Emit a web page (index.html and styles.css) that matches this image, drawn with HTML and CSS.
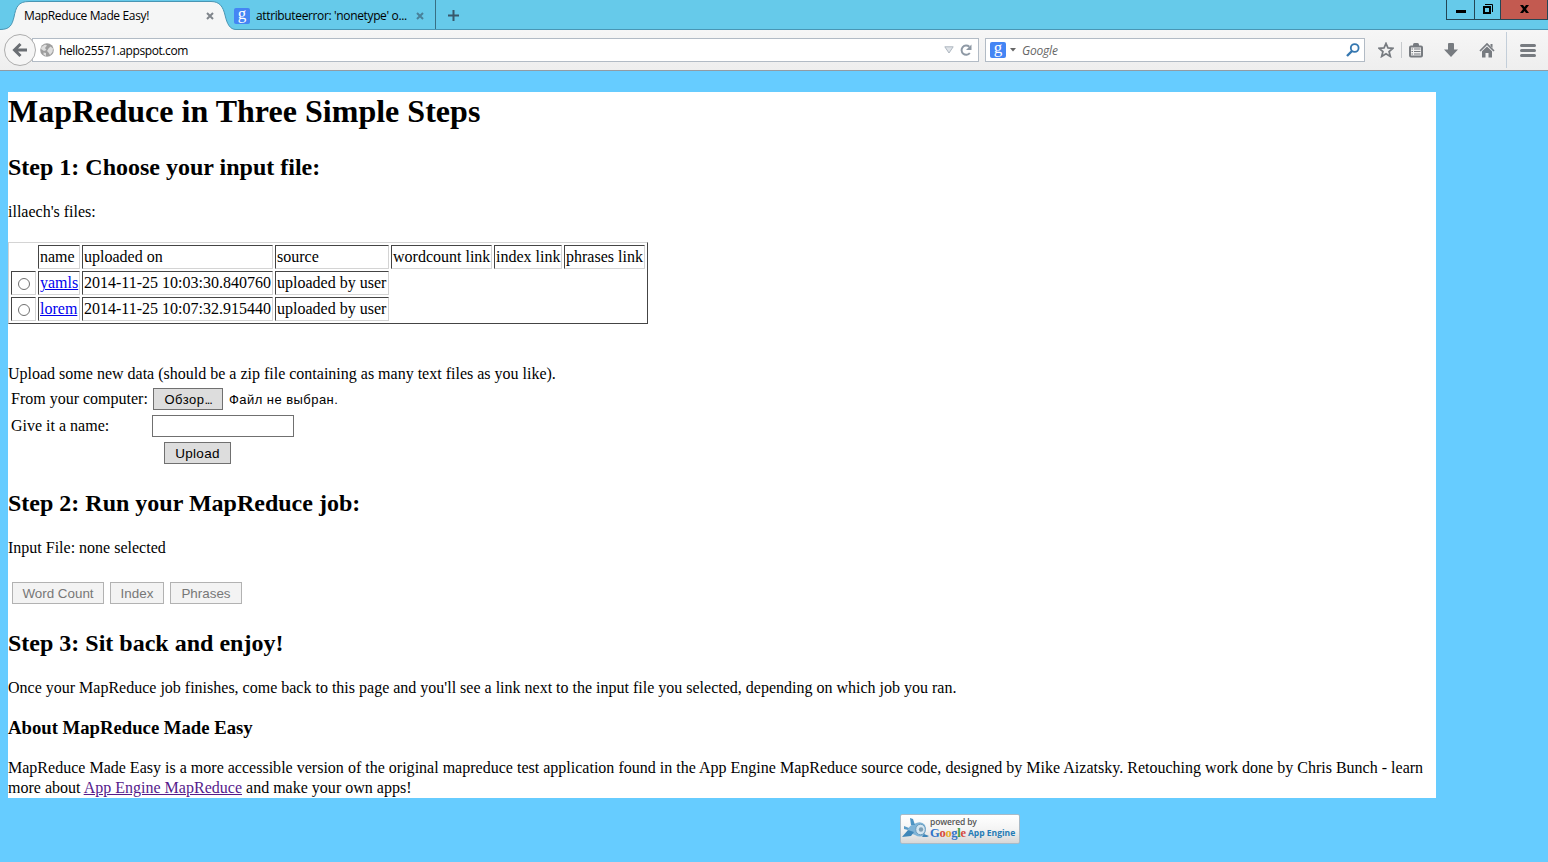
FILE: index.html
```
<!DOCTYPE html>
<html lang="en">
<head>
<meta charset="utf-8">
<title>MapReduce Made Easy!</title>
<link rel="stylesheet" href="styles.css">
</head>
<body>
<header class="chrome">
  <div class="tabs">
    <div class="tab tab-active">
      <svg class="tab-shape" width="236" height="30" viewBox="0 0 236 30"><path d="M0 30V29.5C10 29.5 12 25 14 17C16 7 18 1.5 29 1.5H211C220 1.5 223 7 225 15C227 24 230 29.5 236 29.5V30Z" fill="#f5f6f6"/><path d="M0 29.5C10 29.5 12 25 14 17C16 7 18 1.5 29 1.5H211C220 1.5 223 7 225 15C227 24 230 29.5 236 29.5" fill="none" stroke="#4996b4"/></svg>
      <span class="tab-title t-one">MapReduce Made Easy!</span>
      <svg class="tab-close" width="8" height="8" viewBox="0 0 8 8"><path d="M1 1L7 7M7 1L1 7" stroke="#7f858b" stroke-width="2"/></svg>
    </div>
    <div class="tab tab-other">
      <span class="google-g">g</span>
      <span class="tab-title t-two">attributeerror: 'nonetype' o...</span>
      <svg class="tab-close" width="8" height="8" viewBox="0 0 8 8"><path d="M1 1L7 7M7 1L1 7" stroke="#48819a" stroke-width="2"/></svg>
    </div>
    <svg class="plus" width="11" height="11" viewBox="0 0 11 11"><path d="M5.5 0V11M0 5.5H11" stroke="#38586b" stroke-width="2"/></svg>
    <div class="window-buttons">
      <div class="wb wb-min"><svg width="10" height="3"><rect width="10" height="3"/></svg></div>
      <div class="wb wb-max"><svg width="10" height="10" viewBox="0 0 10 10" fill="none" stroke="#000"><path d="M2 .5H9.5V8"/><rect x="1" y="3" width="6" height="6" stroke-width="2"/></svg></div>
      <div class="wb wb-close"><svg width="9" height="8" viewBox="0 0 9 8"><path d="M0 0H3L4.5 2L6 0H9L6 4L9 8H6L4.5 6L3 8H0L3 4Z"/></svg></div>
    </div>
  </div>
  <div class="toolbar">
    <div class="back"><svg width="16" height="16" viewBox="0 0 16 16"><path d="M8.500 2L2.500 8L8.500 14M3 8H15" fill="none" stroke="#6a6e73" stroke-width="3"/></svg></div>
    <div class="url">
      <svg width="14" height="14" viewBox="0 0 14 14"><circle cx="7" cy="7" r="6.8" fill="#9d9d9d"/><path d="M1.500 4L5 1.500L7 2.500L5 5L6.500 7L4 8L1 6ZM8.500 5.500L10.500 3.500L13 5.500L12.500 9L10 12L8.500 9.500L7 8ZM3.500 9.500L6 10L6 13L3.500 11.500Z" fill="#dedede"/></svg>
      <span class="url-text">hello25571.appspot.com</span>
      <svg class="drop" width="10" height="8" viewBox="0 0 10 8"><path d="M.8 .8H9.2L5 7Z" fill="#dfe3e8" stroke="#aeb7c0"/></svg>
      <svg class="reload" width="12" height="12" viewBox="0 0 12 12"><path d="M9.300 2.800A4.600 4.600 0 1 0 9.800 9" fill="none" stroke="#8e99a5" stroke-width="2"/><path d="M11.500 .5V6H6Z" fill="#8e99a5"/></svg>
    </div>
    <div class="search">
      <span class="google-g">g</span>
      <svg class="caret" width="6" height="4" viewBox="0 0 6 4"><path d="M0 0H6L3 3.500Z" fill="#666"/></svg>
      <span class="search-text">Google</span>
      <svg class="lens" width="14" height="14" viewBox="0 0 14 14" fill="none" stroke="#3577b0"><circle cx="8.700" cy="5" r="3.900" stroke-width="1.800"/><path d="M6 8L1 13" stroke-width="2.400"/></svg>
    </div>
    <div class="tools">
      <svg width="16" height="16" viewBox="0 0 16 16"><path d="M8 1.500L10 6L14.800 6.400L11.100 9.600L12.300 14.400L8 11.800L3.700 14.400L4.900 9.600L1.200 6.400L6 6Z" fill="none" stroke="#777b80" stroke-width="1.800"/></svg>
      <i class="divider"></i>
      <svg class="list" width="14" height="15" viewBox="0 0 14 15"><path d="M4 3V1.500Q4 0 5.500 0H8.500Q10 0 10 1.500V3Z" fill="#777b80"/><rect x="1" y="3.500" width="12" height="10" rx="1" fill="none" stroke="#777b80" stroke-width="2"/><path d="M2.500 6H4M5 6H11.500M2.500 8.500H4M5 8.500H11.500M2.500 11H4M5 11H11.500" stroke="#777b80" stroke-width="1.200"/></svg>
      <svg class="down" width="14" height="14" viewBox="0 0 14 14"><path d="M4 1Q4 0 5 0H9Q10 0 10 1V6.500H14L7 14L0 6.500H4Z" fill="#777b80"/></svg>
      <svg class="home" width="16" height="15" viewBox="0 0 16 15"><path d="M1 8L8 1L15 8" fill="none" stroke="#777b80" stroke-width="1.700"/><path d="M11.500 1H13.500V5L11.500 3ZM3 8.200L8 3.500L13 8.200V14.500H9.500V10H6.500V14.500H3Z" fill="#777b80"/></svg>
      <i class="divider tall"></i>
      <svg class="menu" width="16" height="13" viewBox="0 0 16 13"><path d="M1.500 1.500H14.500M1.500 6.500H14.500M1.500 11.500H14.500" stroke="#777b80" stroke-width="3" stroke-linecap="round"/></svg>
    </div>
  </div>
</header>
<main class="page">
  <h1>MapReduce in Three Simple Steps</h1>
  <h2 class="step-one">Step 1: Choose your input file:</h2>
  <p class="owner">illaech's files:</p>
  <table class="files">
    <colgroup><col class="c1"><col class="c2"><col class="c3"><col class="c4"><col class="c5"><col class="c6"><col class="c7"></colgroup>
    <tr><td class="bare"></td><td>name</td><td>uploaded on</td><td>source</td><td>wordcount link</td><td>index link</td><td>phrases link</td></tr>
    <tr><td><i class="radio"></i></td><td><a href="#">yamls</a></td><td>2014-11-25 10:03:30.840760</td><td>uploaded by user</td></tr>
    <tr><td><i class="radio"></i></td><td><a href="#">lorem</a></td><td>2014-11-25 10:07:32.915440</td><td>uploaded by user</td></tr>
  </table>
  <p class="upload-note">Upload some new data (should be a zip file containing as many text files as you like).</p>
  <form class="upload">
    <div class="row"><span class="label">From your computer:</span><button type="button" class="browse">Обзор<span class="dots">...</span></button><span class="nofile">Файл не выбран.</span></div>
    <div class="row"><span class="label">Give it a name:</span><input class="name" type="text"></div>
    <div class="row"><button type="button" class="send">Upload</button></div>
  </form>
  <h2 class="step-two">Step 2: Run your MapReduce job:</h2>
  <p class="input-file">Input File: none selected</p>
  <div class="jobs"><button class="b1" disabled>Word Count</button><button class="b2" disabled>Index</button><button class="b3" disabled>Phrases</button></div>
  <h2 class="step-three">Step 3: Sit back and enjoy!</h2>
  <p class="once">Once your MapReduce job finishes, come back to this page and you'll see a link next to the input file you selected, depending on which job you ran.</p>
  <h3>About MapReduce Made Easy</h3>
  <p class="about">MapReduce Made Easy is a more accessible version of the original mapreduce test application found in the App Engine MapReduce source code, designed by Mike Aizatsky. Retouching work done by Chris Bunch - learn<br>more about <a class="visited" href="#">App Engine MapReduce</a> and make your own apps!</p>
</main>
<footer class="badge">
  <svg width="27" height="24" viewBox="0 0 27 24"><path d="M6 12Q8 8 12 7Q19 3 23 8Q25 13 22 18Q18 21 13 18Q7 16 6 12Z" fill="#7fb4d8"/><path d="M8 1L11 2L13 8L9 8Z" fill="#4d94c4"/><path d="M0 20L6 13L12 15L9 19Z" fill="#3f86b8"/><path d="M2 9L7 11L6 13L2 12Z" fill="#5a9bc7"/><path d="M22 17L27 19L25 20L20 20Z" fill="#3f86b8"/><ellipse cx="18.500" cy="12.500" rx="4.800" ry="5.300" fill="#d5e6f1" stroke="#6b9cbd"/><circle cx="19" cy="12.500" r="2.200" fill="#7f9fb5"/></svg>
  <div class="badge-text"><span class="powered">powered by</span><span class="brand"><span class="logo"><b class="lb">G</b><b class="lr">o</b><b class="ly">o</b><b class="lb">g</b><b class="lg">l</b><b class="lr">e</b></span><span class="engine">App Engine</span></span></div>
</footer>
</body>
</html>
```
FILE: styles.css
```
* { box-sizing: border-box; }
body { margin: 0; width: 1548px; height: 862px; overflow: hidden; background: #66ccff; color: #000; font: 16px/20px "Liberation Serif", serif; }
svg { display: block; flex: none; }
h1, h2, h3, p { margin: 0; white-space: nowrap; }

.chrome { height: 71px; font: 12px/16px "Open Sans", sans-serif; border-bottom: 1px solid #919ba3; background: #f3f3f3; }
.tabs { height: 30px; display: flex; background: #66caea; border-bottom: 1px solid #4996b4; }
.tab { height: 30px; display: flex; align-items: center; position: relative; }
.tab-shape { position: absolute; left: 0; top: 0; }
.tab-active { width: 225px; padding: 1px 11px 0 24px; z-index: 1; justify-content: space-between; }
.tab-title, .tab-close { position: relative; white-space: nowrap; }
.tab-title { letter-spacing: -0.36px; }
.tab-other { width: 211px; height: 29px; padding: 2px 11px 0 9px; border-right: 1px solid #386f84; }
.tab-other .tab-close { margin-left: auto; }
.t-two { margin-left: 6px; }
.google-g { width: 16px; height: 16px; flex: none; border-radius: 2px; background: #4485f4; color: #fff; font: 17px/12px "Liberation Serif", serif; text-align: center; }
.plus { margin: 10px 0 0 12px; }
.window-buttons { margin-left: auto; width: 102px; height: 20px; display: flex; border: 1px solid #234655; border-top: 0; }
.wb { display: flex; align-items: center; justify-content: center; border-right: 1px solid #234655; }
.wb-min { width: 28px; padding-top: 4px; }
.wb-max { width: 26px; padding-bottom: 1px; }
.wb-close { width: 46px; padding-bottom: 1px; background: #c35a50; border: 0; }
.toolbar { height: 40px; display: flex; align-items: center; padding-left: 4px; background: linear-gradient(#f6f6f6, #eeeeee); }
.back { width: 32px; height: 32px; flex: none; border: 1px solid #adadad; border-radius: 50%; display: flex; align-items: center; justify-content: center; background: #f5f5f5; z-index: 1; }
.url { width: 947px; height: 24px; margin-left: -4px; padding: 0 6px 0 7px; background: #fff; border: 1px solid #b2bbc5; display: flex; align-items: center; }
.url-text { margin-left: 5px; padding-top: 2px; letter-spacing: -0.41px; }
.drop { margin-left: auto; }
.reload { margin-left: 6px; }
.search { width: 380px; height: 24px; margin-left: 6px; padding: 0 4px; background: #fff; border: 1px solid #b2bbc5; display: flex; align-items: center; }
.caret { margin-left: 4px; }
.search-text { margin-left: 6px; padding-top: 2px; letter-spacing: -0.2px; font-style: italic; color: #666; }
.lens { margin-left: auto; }
.tools { display: flex; align-items: center; margin-left: 13px; }
.divider { width: 1px; height: 16px; margin-left: 7px; background: #c6c9cc; }
.tall { height: 36px; margin-left: 11px; background: #c3ced9; }
.list { margin-left: 7px; }
.down { margin-left: 21px; }
.home { margin-left: 21px; }
.menu { margin-left: 13px; }

.page { width: 1428px; height: 706px; margin: 21px 0 0 8px; background: #fff; }
h1 { font-size: 32px; line-height: 38px; letter-spacing: 0.02px; }
h2 { font-size: 24px; line-height: 28px; }
h3 { font-size: 18.72px; line-height: 20px; margin-top: 20px; }
.step-one { margin-top: 23px; }
.owner { margin-top: 21px; }
.files { width: 640px; height: 82px; margin-top: 20px; table-layout: fixed; border: 1px solid; border-color: #d4d4d4 #444 #444 #d4d4d4; border-collapse: separate; border-spacing: 2px; }
.files td { height: 24px; padding: 1px; border: 1px solid; border-color: #444 #d4d4d4 #d4d4d4 #444; white-space: nowrap; line-height: 20px; }
.files .bare { border-color: transparent; }
.c1 { width: 25px; } .c2 { width: 42px; } .c3 { width: 191px; } .c4 { width: 114px; } .c5 { width: 101px; } .c6 { width: 68px; } .c7 { width: 81px; }
.radio { display: block; width: 12px; height: 12px; margin: 2px 0 0 5px; border: 1px solid #707070; border-radius: 50%; }
a { color: #0000ee; }
.visited { color: #551a8b; }
.upload-note { margin-top: 40px; }
.upload { padding: 4px 0 0 3px; }
.row { display: flex; align-items: center; height: 22px; margin-bottom: 5px; }
.label { width: 142px; }
button { height: 22px; padding: 1px 0 0; border: 1px solid #707070; background: #dddddd; color: #000; font: 13px/18px "Liberation Sans", sans-serif; white-space: nowrap; }
.browse { width: 70px; letter-spacing: 0.5px; }
.dots { letter-spacing: -1.3px; }
.nofile { margin-left: 6px; padding-top: 1px; font: 13px/18px "Liberation Sans", sans-serif; letter-spacing: 0.45px; }
.name { width: 142px; height: 22px; margin-left: -1px; border: 1px solid #707070; background: #fff; }
.send { width: 67px; margin-left: 153px; font-size: 13.5px; letter-spacing: 0.3px; }
.step-two { margin-top: 25px; }
.input-file { margin-top: 21px; }
.jobs { display: flex; gap: 6px; margin: 24px 0 0 4px; }
.jobs button { border-color: #b2b2b2; background: #f3f3f3; color: #777; font-size: 13.4px; }
.b1 { width: 92px; } .b2 { width: 54px; } .b3 { width: 72px; }
.step-three { margin-top: 25px; }
.once { margin-top: 21px; }
.about { margin-top: 20px; letter-spacing: 0.009px; }

.badge { width: 120px; height: 30px; margin: 16px 0 0 900px; padding: 2px 1px 0; display: flex; border: 1px solid #a9bbc8; border-radius: 2px; background: linear-gradient(#fff, #f4f4f4 50%, #d7d7d7); }
.badge-text { display: flex; flex-direction: column; margin-left: 1px; white-space: nowrap; font-family: "Open Sans", sans-serif; font-weight: 600; }
.powered { font-size: 8.5px; line-height: 10px; letter-spacing: -0.15px; color: #555; }
.brand { display: flex; align-items: center; height: 12px; }
.logo { width: 38px; font: 12.5px/12px "Liberation Serif", serif; letter-spacing: -0.3px; }
.lb { color: #3273c8; } .lr { color: #d64a3d; } .ly { color: #e7ac22; } .lg { color: #3c9a48; }
.engine { font-size: 8.5px; line-height: 12px; font-weight: 700; color: #247bb5; }
```
